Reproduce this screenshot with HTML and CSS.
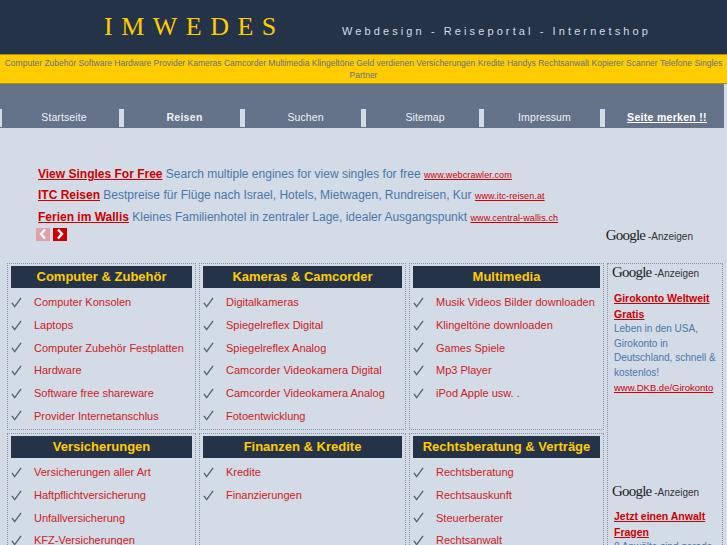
FILE: index.html
```html
<!DOCTYPE html>
<html>
<head>
    <title>IMWEDES</title>
    <link rel="stylesheet" href="styles.css">
</head>
<body>
    <div class="page">
        <div class="header">
            <div class="logo">IMWEDES</div>
            <div class="slogan">Webdesign - Reiseportal - Internetshop</div>
        </div>

        <div class="keywords">Computer Zubehör Software Hardware Provider Kameras Camcorder Multimedia Klingeltöne Geld verdienen Versicherungen Kredite Handys Rechtsanwalt Kopierer Scanner Telefone Singles Partner</div>

        <div class="nav">
            <a href="#">Startseite</a>
            <a href="#" class="active">Reisen</a>
            <a href="#">Suchen</a>
            <a href="#">Sitemap</a>
            <a href="#">Impressum</a>
            <a href="#" class="bookmark">Seite merken !!</a>
        </div>

        <div class="top-ads">
            <p><a href="#" class="ad-title">View Singles For Free</a> Search multiple engines for view singles for free <a href="#" class="ad-url">www.webcrawler.com</a></p>
            <p><a href="#" class="ad-title">ITC Reisen</a> Bestpreise für Flüge nach Israel, Hotels, Mietwagen, Rundreisen, Kur <a href="#" class="ad-url">www.itc-reisen.at</a></p>
            <p><a href="#" class="ad-title">Ferien im Wallis</a> Kleines Familienhotel in zentraler Lage, idealer Ausgangspunkt <a href="#" class="ad-url">www.central-wallis.ch</a></p>
            <div class="ad-foot">
                <div class="pager">
                    <span class="page-btn off"><svg width="10" height="12" viewBox="0 0 10 12"><path d="M7 1.5 3 6l4 4.5" fill="none" stroke="#fff" stroke-width="2.4"/></svg></span>
                    <span class="page-btn"><svg width="10" height="12" viewBox="0 0 10 12"><path d="M3 1.5 7 6l-4 4.5" fill="none" stroke="#fff" stroke-width="2.4"/></svg></span>
                </div>
                <div class="google"><span class="google-word">Google</span> -Anzeigen</div>
            </div>
        </div>

        <div class="main">
            <div class="box">
                <h2>Computer &amp; Zubehör</h2>
                <ul>
                    <li><svg class="check" viewBox="0 0 12 12"><path d="M1 6.5 4 10.5 11 1"/></svg><a href="#">Computer Konsolen</a></li>
                    <li><svg class="check" viewBox="0 0 12 12"><path d="M1 6.5 4 10.5 11 1"/></svg><a href="#">Laptops</a></li>
                    <li><svg class="check" viewBox="0 0 12 12"><path d="M1 6.5 4 10.5 11 1"/></svg><a href="#">Computer Zubehör Festplatten</a></li>
                    <li><svg class="check" viewBox="0 0 12 12"><path d="M1 6.5 4 10.5 11 1"/></svg><a href="#">Hardware</a></li>
                    <li><svg class="check" viewBox="0 0 12 12"><path d="M1 6.5 4 10.5 11 1"/></svg><a href="#">Software free shareware</a></li>
                    <li><svg class="check" viewBox="0 0 12 12"><path d="M1 6.5 4 10.5 11 1"/></svg><a href="#">Provider Internetanschlus</a></li>
                </ul>
            </div>
            <div class="box">
                <h2>Kameras &amp; Camcorder</h2>
                <ul>
                    <li><svg class="check" viewBox="0 0 12 12"><path d="M1 6.5 4 10.5 11 1"/></svg><a href="#">Digitalkameras</a></li>
                    <li><svg class="check" viewBox="0 0 12 12"><path d="M1 6.5 4 10.5 11 1"/></svg><a href="#">Spiegelreflex Digital</a></li>
                    <li><svg class="check" viewBox="0 0 12 12"><path d="M1 6.5 4 10.5 11 1"/></svg><a href="#">Spiegelreflex Analog</a></li>
                    <li><svg class="check" viewBox="0 0 12 12"><path d="M1 6.5 4 10.5 11 1"/></svg><a href="#">Camcorder Videokamera Digital</a></li>
                    <li><svg class="check" viewBox="0 0 12 12"><path d="M1 6.5 4 10.5 11 1"/></svg><a href="#">Camcorder Videokamera Analog</a></li>
                    <li><svg class="check" viewBox="0 0 12 12"><path d="M1 6.5 4 10.5 11 1"/></svg><a href="#">Fotoentwicklung</a></li>
                </ul>
            </div>
            <div class="box">
                <h2>Multimedia</h2>
                <ul>
                    <li><svg class="check" viewBox="0 0 12 12"><path d="M1 6.5 4 10.5 11 1"/></svg><a href="#">Musik Videos Bilder downloaden</a></li>
                    <li><svg class="check" viewBox="0 0 12 12"><path d="M1 6.5 4 10.5 11 1"/></svg><a href="#">Klingeltöne downloaden</a></li>
                    <li><svg class="check" viewBox="0 0 12 12"><path d="M1 6.5 4 10.5 11 1"/></svg><a href="#">Games Spiele</a></li>
                    <li><svg class="check" viewBox="0 0 12 12"><path d="M1 6.5 4 10.5 11 1"/></svg><a href="#">Mp3 Player</a></li>
                    <li><svg class="check" viewBox="0 0 12 12"><path d="M1 6.5 4 10.5 11 1"/></svg><a href="#">iPod Apple usw. .</a></li>
                </ul>
            </div>
            <div class="side">
                <div class="google"><span class="google-word">Google</span> -Anzeigen</div>
                <div class="side-ad">
                    <a href="#" class="ad-title">Girokonto Weltweit Gratis</a>
                    <p>Leben in den USA, Girokonto in Deutschland, schnell &amp; kostenlos!</p>
                    <a href="#" class="side-url">www.DKB.de/Girokonto</a>
                </div>
                <div class="google lower"><span class="google-word">Google</span> -Anzeigen</div>
                <div class="side-ad">
                    <a href="#" class="ad-title">Jetzt einen Anwalt Fragen</a>
                    <p>8 Anwälte sind gerade</p>
                </div>
            </div>
            <div class="box">
                <h2>Versicherungen</h2>
                <ul>
                    <li><svg class="check" viewBox="0 0 12 12"><path d="M1 6.5 4 10.5 11 1"/></svg><a href="#">Versicherungen aller Art</a></li>
                    <li><svg class="check" viewBox="0 0 12 12"><path d="M1 6.5 4 10.5 11 1"/></svg><a href="#">Haftpflichtversicherung</a></li>
                    <li><svg class="check" viewBox="0 0 12 12"><path d="M1 6.5 4 10.5 11 1"/></svg><a href="#">Unfallversicherung</a></li>
                    <li><svg class="check" viewBox="0 0 12 12"><path d="M1 6.5 4 10.5 11 1"/></svg><a href="#">KFZ-Versicherungen</a></li>
                </ul>
            </div>
            <div class="box">
                <h2>Finanzen &amp; Kredite</h2>
                <ul>
                    <li><svg class="check" viewBox="0 0 12 12"><path d="M1 6.5 4 10.5 11 1"/></svg><a href="#">Kredite</a></li>
                    <li><svg class="check" viewBox="0 0 12 12"><path d="M1 6.5 4 10.5 11 1"/></svg><a href="#">Finanzierungen</a></li>
                </ul>
            </div>
            <div class="box">
                <h2>Rechtsberatung &amp; Verträge</h2>
                <ul>
                    <li><svg class="check" viewBox="0 0 12 12"><path d="M1 6.5 4 10.5 11 1"/></svg><a href="#">Rechtsberatung</a></li>
                    <li><svg class="check" viewBox="0 0 12 12"><path d="M1 6.5 4 10.5 11 1"/></svg><a href="#">Rechtsauskunft</a></li>
                    <li><svg class="check" viewBox="0 0 12 12"><path d="M1 6.5 4 10.5 11 1"/></svg><a href="#">Steuerberater</a></li>
                    <li><svg class="check" viewBox="0 0 12 12"><path d="M1 6.5 4 10.5 11 1"/></svg><a href="#">Rechtsanwalt</a></li>
                </ul>
            </div>
        </div>
    </div>
</body>
</html>
```

FILE: styles.css
```css
html, body {
    margin: 0;
    padding: 0;
    height: 545px;
    overflow: hidden;
}

body {
    font-family: "Liberation Sans", Arial, sans-serif;
    background-color: #d3dbe7;
}

a {
    color: #cc0000;
}

.header {
    height: 54px;
    display: flex;
    background-color: #253349;
}

.logo {
    width: 342px;
    padding: 12px 0 0 104px;
    box-sizing: border-box;
    font-family: "Liberation Serif", "Times New Roman", serif;
    font-size: 26px;
    line-height: 30px;
    letter-spacing: 8.5px;
    color: #ffcc00;
}

.slogan {
    padding-top: 24px;
    font-size: 11px;
    line-height: 14px;
    letter-spacing: 3.1px;
    color: #d3dbe7;
}

.keywords {
    height: 26px;
    padding: 2px 2px 0;
    border-top: 1px solid #a88f20;
    border-bottom: 1px solid #a88f20;
    background-color: #ffcc00;
    font-size: 8.5px;
    line-height: 12px;
    text-align: center;
    color: #64728a;
}

.nav {
    height: 44px;
    padding: 25px 0 1px;
    box-sizing: border-box;
    display: grid;
    grid-template-columns: 119px 121px 121px 118px 121px 124px;
    background-color: #64728a;
    border-right: 3px solid #d3dbe7;
}

.nav a {
    padding-left: 5px;
    box-sizing: border-box;
    line-height: 16px;
    border-left: 5px solid #d3dbe7;
    text-align: center;
    font-size: 10.5px;
    letter-spacing: 0.1px;
    color: #eef1f5;
    text-decoration: none;
}

.nav a:first-child {
    border-left-width: 2px;
    padding-left: 7px;
}

.nav a.active {
    font-weight: bold;
    letter-spacing: 0.3px;
}

.nav a.bookmark {
    font-weight: bold;
    letter-spacing: 0.3px;
    color: #fff;
    text-decoration: underline;
}

.top-ads {
    height: 135px;
    padding: 37px 34px 0 38px;
    box-sizing: border-box;
    font-size: 12px;
    color: #4a78aa;
}

.top-ads p {
    margin: 0;
    height: 21.3px;
    line-height: 18px;
    white-space: nowrap;
}

.ad-title {
    font-weight: bold;
}

.ad-url {
    font-size: 9px;
    letter-spacing: 0.1px;
}

.ad-foot {
    display: flex;
    justify-content: space-between;
    align-items: flex-start;
}

.pager {
    display: flex;
    gap: 3px;
    margin: -1px 0 0 -2px;
}

.page-btn {
    width: 14px;
    height: 13px;
    display: flex;
    align-items: center;
    justify-content: center;
    background-color: #cc0000;
}

.page-btn.off {
    background-color: #e0a0a8;
}

.google {
    font-size: 10px;
    letter-spacing: 0;
    color: #333;
    line-height: 18px;
    white-space: nowrap;
}

.google-word {
    font-family: "Liberation Serif", serif;
    font-size: 15px;
    letter-spacing: -0.8px;
    color: #222;
}

.top-ads .google {
    margin-top: -2.5px;
}

.main {
    display: grid;
    grid-template-columns: 189px 207px 195px 116px;
    grid-template-rows: 167px 130px;
    gap: 3px;
    margin-left: 7px;
}

.box {
    border: 1px dotted #8a94a5;
    padding: 2px 3px;
    overflow: hidden;
    box-sizing: border-box;
    font-size: 11px;
}

.box h2 {
    margin: 0 0 3px;
    height: 22px;
    line-height: 22px;
    background-color: #253349;
    text-align: center;
    font-size: 13px;
    color: #ffcc00;
}

.box ul {
    list-style: none;
    margin: 0;
    padding: 0;
}

.box li {
    height: 22.7px;
    line-height: 22px;
    display: flex;
    align-items: center;
    white-space: nowrap;
}

.box a {
    color: #cc2222;
    text-decoration: none;
}

.check {
    width: 11px;
    height: 11px;
    margin-right: 12px;
    flex-shrink: 0;
}

.check path {
    fill: none;
    stroke: #55637b;
    stroke-width: 1.5;
}

.side {
    grid-column: 4;
    grid-row: 1 / 3;
    border: 1px dotted #8a94a5;
    padding: 0 2px 0 6px;
    box-sizing: border-box;
    font-size: 10px;
    color: #4a78aa;
}

.side .google {
    margin: -1px 0 7px -2px;
}

.side .google.lower {
    margin-top: 87px;
    margin-bottom: 6px;
}

.side-ad .ad-title {
    display: block;
    font-size: 10.5px;
    line-height: 16px;
}

.side-ad p {
    margin: 0;
    line-height: 14.5px;
}

.side-url {
    display: block;
    line-height: 15px;
    font-size: 9.5px;
}
```
